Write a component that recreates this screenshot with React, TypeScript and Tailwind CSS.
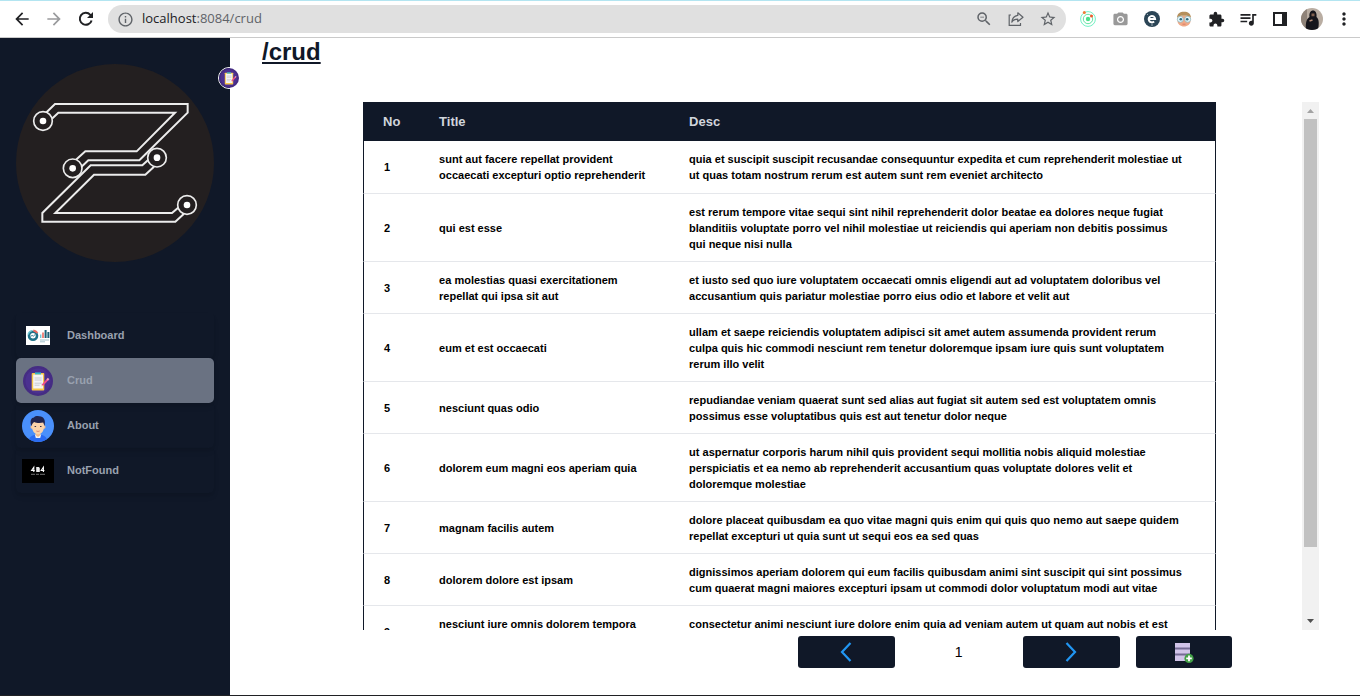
import type { ReactNode } from "react";
import {
  MdArrowBack,
  MdArrowForward,
  MdCameraAlt,
  MdExtension,
  MdInfoOutline,
  MdMoreVert,
  MdQueueMusic,
  MdStarBorder,
  MdZoomOut,
} from "react-icons/md";

type Post = { id: number; title: string; desc: string };

const posts: Post[] = [
  {
    id: 1,
    title: "sunt aut facere repellat provident\noccaecati excepturi optio reprehenderit",
    desc: "quia et suscipit suscipit recusandae consequuntur expedita et cum reprehenderit molestiae ut\nut quas totam nostrum rerum est autem sunt rem eveniet architecto",
  },
  {
    id: 2,
    title: "qui est esse",
    desc: "est rerum tempore vitae sequi sint nihil reprehenderit dolor beatae ea dolores neque fugiat\nblanditiis voluptate porro vel nihil molestiae ut reiciendis qui aperiam non debitis possimus\nqui neque nisi nulla",
  },
  {
    id: 3,
    title: "ea molestias quasi exercitationem\nrepellat qui ipsa sit aut",
    desc: "et iusto sed quo iure voluptatem occaecati omnis eligendi aut ad voluptatem doloribus vel\naccusantium quis pariatur molestiae porro eius odio et labore et velit aut",
  },
  {
    id: 4,
    title: "eum et est occaecati",
    desc: "ullam et saepe reiciendis voluptatem adipisci sit amet autem assumenda provident rerum\nculpa quis hic commodi nesciunt rem tenetur doloremque ipsam iure quis sunt voluptatem\nrerum illo velit",
  },
  {
    id: 5,
    title: "nesciunt quas odio",
    desc: "repudiandae veniam quaerat sunt sed alias aut fugiat sit autem sed est voluptatem omnis\npossimus esse voluptatibus quis est aut tenetur dolor neque",
  },
  {
    id: 6,
    title: "dolorem eum magni eos aperiam quia",
    desc: "ut aspernatur corporis harum nihil quis provident sequi mollitia nobis aliquid molestiae\nperspiciatis et ea nemo ab reprehenderit accusantium quas voluptate dolores velit et\ndoloremque molestiae",
  },
  {
    id: 7,
    title: "magnam facilis autem",
    desc: "dolore placeat quibusdam ea quo vitae magni quis enim qui quis quo nemo aut saepe quidem\nrepellat excepturi ut quia sunt ut sequi eos ea sed quas",
  },
  {
    id: 8,
    title: "dolorem dolore est ipsam",
    desc: "dignissimos aperiam dolorem qui eum facilis quibusdam animi sint suscipit qui sint possimus\ncum quaerat magni maiores excepturi ipsam ut commodi dolor voluptatum modi aut vitae",
  },
  {
    id: 9,
    title: "nesciunt iure omnis dolorem tempora\net accusantium",
    desc: "consectetur animi nesciunt iure dolore enim quia ad veniam autem ut quam aut nobis et est\naut quod aut provident voluptas autem voluptas",
  },
];

function ClipboardIcon({ className }: { className: string }) {
  return (
    <svg viewBox="0 0 30 30" className={className} aria-hidden="true">
      <circle cx="15" cy="15" r="15" fill="#452c83" />
      <circle cx="15" cy="15" r="12.5" fill="#4b3190" />
      <rect x="8.7" y="7" width="12.6" height="17.6" rx="1" fill="#f7c84a" />
      <rect x="10.2" y="8.5" width="9.8" height="14" fill="#f4f4f6" />
      <path d="M12 6.4h6v2h-6z" fill="#36b7c7" />
      <path d="M11.6 12h7M11.6 14h7M11.6 17.2h7M11.6 19.2h5" stroke="#c3c5cd" strokeWidth=".9" />
      <path d="M19.2 19.4l5.6-6" stroke="#ef4f8a" strokeWidth="2" />
      <path d="M24.2 14l1.4-1.5" stroke="#f7a3b8" strokeWidth="2" />
      <path d="M18.2 20.6l.5-1.8 1.2 1.2z" fill="#f6d9a8" />
    </svg>
  );
}

function DashboardIcon() {
  return (
    <svg viewBox="0 0 24 19" className="h-[19px] w-6" aria-hidden="true">
      <rect width="24" height="19" fill="#fff" />
      <circle cx="7" cy="9.8" r="4" fill="none" stroke="#1f7288" strokeWidth="2.6" />
      <path d="M4.6 10.4l1.5-1 1.2.8 2-1.8" fill="none" stroke="#1f7288" strokeWidth=".9" />
      <path d="M2 8.6a5.4 5.4 0 0 1 4-4" fill="none" stroke="#6fc6d3" strokeWidth="1.3" />
      <path d="M7.4 4.4a5.4 5.4 0 0 1 4 2.6" fill="none" stroke="#ee6a5f" strokeWidth="2" />
      <path d="M14.7 12V8.5" stroke="#6fc6d3" strokeWidth="1.4" />
      <path d="M17 12V6.5" stroke="#ee6a5f" strokeWidth="1.6" />
      <path d="M19.6 12V4M22.4 12V6" stroke="#1b6076" strokeWidth="2" />
      <path d="M14 14h9M14 15.8h5" stroke="#8ab2be" strokeWidth=".8" />
    </svg>
  );
}

function PersonIcon() {
  return (
    <svg viewBox="0 0 32 32" className="size-8" aria-hidden="true">
      <circle cx="16" cy="16" r="16" fill="#4a90fb" />
      <path d="M7 29.2c.8-2.700 3.500-4 6-4.500h6c2.500.5 5.200 1.800 6 4.500A16 16 0 0 1 7 29.200z" fill="#2a6bf2" />
      <path d="M12.800 24.500h6.400l-1 3.500h-4.400z" fill="#f1f3f8" />
      <path d="M13.700 21h4.600v4.200L16 27l-2.300-1.800z" fill="#f0b888" />
      <ellipse cx="9.800" cy="17" rx="1.300" ry="1.800" fill="#f5c396" />
      <ellipse cx="22.200" cy="17" rx="1.300" ry="1.800" fill="#f5c396" />
      <path d="M10 12h12v5c0 4-2.800 7.300-6 7.300S10 21 10 17z" fill="#fbd3aa" />
      <path d="M9.300 16C7.500 10 9.500 7.600 12 7.400c1-1.500 4.500-1.600 7-.8 3 .9 4.800 4 3.500 9.400l-1.300-3.600c-3 .8-6.800.6-9-.5-1.400 1-2.200 2.400-2.900 4.100z" fill="#20244e" />
      <path d="M12.600 16.500h1.500M18 16.500h1.500" stroke="#37304a" strokeWidth="1" />
      <path d="M14.300 21q1.700 1 3.400 0" fill="none" stroke="#d97b6a" strokeWidth=".8" />
    </svg>
  );
}

function NotFoundIcon() {
  return (
    <svg viewBox="0 0 32 24" className="h-6 w-8" aria-hidden="true">
      <rect width="32" height="24" fill="#000" />
      <path d="M11.800 13V8.300L9.600 11.500h3.200M21.400 13V8.300l-2.200 3.200h3.200" fill="none" stroke="#fff" strokeWidth="1.100" />
      <path d="M14.200 8h2.600l1 1v4h-3.600z" fill="#e9e9e9" />
      <path d="M9 15.300h4M14 15.300h3M18 15.300h5" stroke="#8f8f8f" strokeWidth=".8" />
    </svg>
  );
}

function Logo() {
  const nodes = [
    [129, 213],
    [218, 355],
    [471, 323],
    [561, 465],
  ];
  return (
    <svg viewBox="48 42 594 594" className="w-full" role="img" aria-label="Z logo">
      <circle cx="345" cy="339" r="297" fill="#231f20" />
      <g fill="none" stroke="#ececec" strokeWidth="6">
        <path d="M138 188L165 162H563V188L418 331H265L240 355" />
        <path d="M155 207L175 188H525L410 304H256L228 329" />
        <path d="M450 325L427 346H272L127 489V515H526L552 491" />
        <path d="M462 350L436 374H282L166 489H516L538 470" />
      </g>
      {nodes.map(([x, y]) => (
        <g key={x}>
          <circle cx={x} cy={y} r="28" fill="#231f20" stroke="#ececec" strokeWidth="5" />
          <circle cx={x} cy={y} r="10" fill="#fff" />
        </g>
      ))}
    </svg>
  );
}

function BarButton({ label, children }: { label: string; children: ReactNode }) {
  return (
    <button type="button" aria-label={label} className="flex h-7 w-8 shrink-0 items-center justify-center">
      {children}
    </button>
  );
}

function BrowserBar() {
  return (
    <header className="flex h-[38px] shrink-0 items-center border-t-1 border-b border-t-[#b3e5f1] border-b-[#cacaca] bg-white pl-[6px] text-[#202124]">
      <BarButton label="Back"><MdArrowBack className="size-5" /></BarButton>
      <BarButton label="Forward"><MdArrowForward className="size-5 text-[#9a9b9d]" /></BarButton>
      <BarButton label="Reload">
        <svg viewBox="0 0 16 16" className="size-4" fill="none">
          <path d="M13.600 9.400A6 6 0 1 1 12.300 3.800L14 5.500" stroke="currentColor" strokeWidth="2" />
          <path d="M15 1v6H9z" fill="currentColor" />
        </svg>
      </BarButton>
      <div className="ml-[6px] flex h-7 min-w-0 flex-1 items-center rounded-full bg-[#e0e0e0] pr-[2px] pl-[9px] text-[#5f6368]">
        <MdInfoOutline className="size-[17px] shrink-0" aria-hidden="true" />
        <a href="#crud" className="ml-2 flex-1 font-['Open_Sans',sans-serif] text-[13px] text-[#5f6368]">
          <span className="text-[#202124]">localhost</span>:8084/crud
        </a>
        <BarButton label="Zoom"><MdZoomOut className="size-[18px]" /></BarButton>
        <BarButton label="Share">
          <svg viewBox="0 0 16 16" className="size-4" fill="none" stroke="currentColor" strokeWidth="1.200">
            <path d="M3 4H1.200v10.400h11.300V12" />
            <path d="M9.800 1.800L15 6.200l-5.200 4.300V8.200c-3 0-4.800.9-6 3 .3-3.700 2.300-6.300 6-6.800z" strokeLinejoin="round" />
          </svg>
        </BarButton>
        <BarButton label="Bookmark"><MdStarBorder className="size-[18px]" /></BarButton>
      </div>
      <div className="ml-[6px] flex">
        <BarButton label="Orbit extension">
          <svg viewBox="0 0 16 16" className="size-4" fill="none">
            <circle cx="8" cy="8" r="7.400" stroke="#71f0c4" strokeWidth="1" />
            <circle cx="8" cy="8" r="4.700" stroke="#63e5a4" strokeWidth="1" />
            <circle cx="8" cy="8" r="2.200" fill="#4be08a" />
            <circle cx="4.300" cy="1.600" r="1.500" fill="#f27b35" />
            <circle cx="11.500" cy="5" r="1.500" fill="#f0582b" />
          </svg>
        </BarButton>
        <BarButton label="Screenshot extension"><MdCameraAlt className="size-[17px] text-[#999]" /></BarButton>
        <BarButton label="Editor extension">
          <svg viewBox="0 0 16 16" className="size-4" fill="none">
            <circle cx="8" cy="8" r="8" fill="#2b4556" />
            <path d="M4.800 8h6.300a3.200 3.200 0 1 0-1 2.500" stroke="#fff" strokeWidth="2" />
            <path d="M8 13v2M3 3l1 1" stroke="#b9c6ce" strokeWidth=".8" />
          </svg>
        </BarButton>
        <BarButton label="Character extension">
          <svg viewBox="0 0 16 16" className="size-4">
            <path d="M1.500 5h13v5c0 3-3 5.500-6.500 5.500S1.500 13 1.500 10z" fill="#f0a987" />
            <path d="M1.200 6.500C1 2.800 4 .8 8 .8s7 2 6.800 5.700L11 4.800H5z" fill="#b58f5c" />
            <circle cx="4.300" cy="8.300" r="3" fill="#e8f8fb" stroke="#8fb8c0" strokeWidth=".8" />
            <circle cx="11.700" cy="8.300" r="3" fill="#e8f8fb" stroke="#8fb8c0" strokeWidth=".8" />
            <circle cx="4.800" cy="8.300" r="1.300" fill="#2d6b80" />
            <circle cx="11.200" cy="8.300" r="1.300" fill="#2d6b80" />
            <path d="M6.500 13.200h3" stroke="#d97f68" />
          </svg>
        </BarButton>
        <BarButton label="Extensions"><MdExtension className="size-[17px]" /></BarButton>
        <BarButton label="Media controls"><MdQueueMusic className="size-5" /></BarButton>
        <BarButton label="Side panel">
          <svg viewBox="0 0 14 14" className="size-[14px]">
            <path fillRule="evenodd" fill="currentColor" d="M0 0h14v14H0zM2 2v10h7V2z" />
          </svg>
        </BarButton>
        <BarButton label="Profile">
          <svg viewBox="0 0 22 22" className="size-[22px]">
            <defs>
              <clipPath id="avatar"><circle cx="11" cy="11" r="11" /></clipPath>
            </defs>
            <g clipPath="url(#avatar)">
              <rect width="22" height="22" fill="#b9ada2" />
              <rect width="6" height="22" fill="#8f8379" />
              <path d="M5 22c-.5-6 0-11 3.500-13C8 5 9.500 2.500 12 2.500S16 5 15.500 9c3 2 2.500 8 1.500 13z" fill="#15151b" />
              <path d="M10.500 5.500h3v2.800h-3z" fill="#80604f" />
              <path d="M8.500 13l3-1" stroke="#b58c77" strokeWidth="1.500" />
            </g>
          </svg>
        </BarButton>
        <BarButton label="Menu"><MdMoreVert className="size-5" /></BarButton>
      </div>
    </header>
  );
}

const links: { label: string; icon: ReactNode; active?: boolean }[] = [
  { label: "Dashboard", icon: <DashboardIcon /> },
  { label: "Crud", icon: <ClipboardIcon className="size-[30px]" />, active: true },
  { label: "About", icon: <PersonIcon /> },
  { label: "NotFound", icon: <NotFoundIcon /> },
];

function Sidebar() {
  return (
    <aside className="relative w-[230px] shrink-0 bg-gray-900 px-4 pt-[26px]">
      <Logo />
      <span className="absolute top-[29px] -right-[10px] rounded-full border border-white">
        <ClipboardIcon className="size-5" />
      </span>
      <nav className="mt-[51px] flex flex-col">
        {links.map((link) => (
          <a
            key={link.label}
            href={`#${link.label.toLowerCase()}`}
            className={`flex h-[45px] items-center rounded-[5px] px-[6px] text-[11px] font-bold text-gray-400 shadow-md ${
              link.active ? "bg-gray-500" : ""
            }`}
          >
            <span className="flex w-8 justify-center">{link.icon}</span>
            <span className="ml-[13px]">{link.label}</span>
          </a>
        ))}
      </nav>
    </aside>
  );
}

function PostTable() {
  return (
    <table className="mx-auto w-[83.2%] table-fixed border-separate border-spacing-0 text-left">
      <thead>
        <tr className="h-[39px] bg-gray-900 text-[13px] text-gray-300">
          <th className="w-[56px] pl-5">No</th>
          <th className="w-[250px] pl-5">Title</th>
          <th className="pl-5">Desc</th>
        </tr>
      </thead>
      <tbody className="text-[11px] leading-4 font-bold text-black">
        {posts.map((post) => (
          <tr key={post.id}>
            <td className="border-b border-l border-b-gray-200 border-l-gray-900 pl-5">{post.id}</td>
            <td className="border-b border-gray-200 pl-5 whitespace-pre">{post.title}</td>
            <td className="border-r border-b border-r-gray-900 border-b-gray-200 py-[10px] pl-5 whitespace-pre [tr:nth-child(n+2)>&]:pb-[9px]">
              {post.desc}
            </td>
          </tr>
        ))}
      </tbody>
    </table>
  );
}

function Scrollbar() {
  return (
    <div className="flex w-[17px] shrink-0 flex-col items-center bg-[#f1f1f1]" aria-hidden="true">
      <svg viewBox="0 0 17 17" className="size-[17px] shrink-0">
        <path d="M5 11h7L8.500 7z" fill="#a3a3a3" />
      </svg>
      <div className="w-[13px] grow-[428] bg-[#c1c1c1]" />
      <div className="grow-[66]" />
      <svg viewBox="0 0 17 17" className="size-[17px] shrink-0">
        <path d="M5 6h7l-3.500 4z" fill="#505050" />
      </svg>
    </div>
  );
}

const pagerButton = "flex items-center justify-center rounded-[3px] bg-gray-900";

function Pager() {
  return (
    <div className="mt-[6px] mr-[87px] grid h-8 w-[434px] grid-cols-4 gap-4 self-end">
      <button type="button" aria-label="Previous page" className={pagerButton}>
        <svg viewBox="0 0 12 20" className="h-5 w-3" fill="none" stroke="#2196f3" strokeWidth="2.200">
          <path d="M10.500 1L2 10l8.500 9" />
        </svg>
      </button>
      <span className="flex items-center justify-center text-sm text-black">1</span>
      <button type="button" aria-label="Next page" className={pagerButton}>
        <svg viewBox="0 0 12 20" className="h-5 w-3" fill="none" stroke="#2196f3" strokeWidth="2.200">
          <path d="M1.500 1l8.500 9-8.500 9" />
        </svg>
      </button>
      <button type="button" aria-label="Add row" className={pagerButton}>
        <svg viewBox="0 0 20 22" className="h-[22px] w-5">
          <rect x="1" y="2" width="15" height="18" fill="#756b94" />
          <path d="M1 2h15v4.500H1zM1 8.500h15v4H1zM1 14.500h15V20H1z" fill="#d1c4e9" />
          <circle cx="15" cy="17.400" r="4.600" fill="#43a047" />
          <path d="M15 14.600v5.600M12.200 17.400h5.600" stroke="#fff" strokeWidth="1.800" />
        </svg>
      </button>
    </div>
  );
}

export default function App() {
  return (
    <div className="flex h-screen flex-col overflow-hidden border-b border-[#202124] bg-white font-['Liberation_Sans',Arial,sans-serif]">
      <BrowserBar />
      <div className="flex min-h-0 flex-1">
        <Sidebar />
        <main className="flex min-w-0 flex-1 flex-col pr-[41px] pb-[27px] pl-8">
          <h1 className="text-2xl leading-7 font-bold text-gray-900 underline">/crud</h1>
          <div className="mt-9 ml-[15px] flex min-h-0 flex-1">
            <div className="min-w-0 flex-1 overflow-hidden">
              <PostTable />
            </div>
            <Scrollbar />
          </div>
          <Pager />
        </main>
      </div>
    </div>
  );
}
